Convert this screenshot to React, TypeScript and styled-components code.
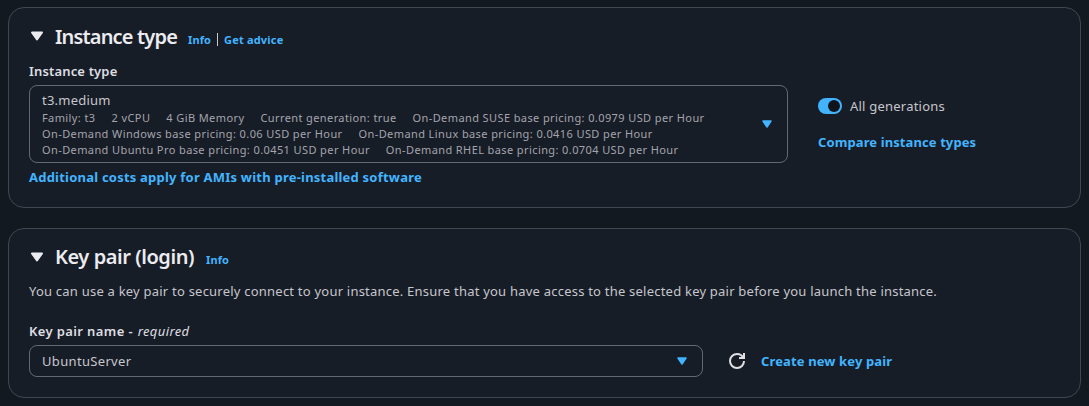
import React from "react";
import styled, { createGlobalStyle } from "styled-components";

const Global = createGlobalStyle`
  * { box-sizing: border-box; }
  body {
    margin: 0;
    background: #131920;
    color: #c6c6cd;
    font: 13px/20px "Noto Sans", "Open Sans", sans-serif;
    letter-spacing: 0.22px;
  }
`;

const Page = styled.main`
  display: flex;
  flex-direction: column;
  gap: 20px;
  padding: 7px 8px 8px;
`;

const Panel = styled.section<{ $height: number; $top: number }>`
  height: ${(p) => p.$height}px;
  padding: ${(p) => p.$top}px 20px 0;
  background: #171d26;
  border: 1px solid #424650;
  border-radius: 16px;
`;

const Header = styled.header`
  display: flex;
  align-items: center;
  height: 28px;
  white-space: nowrap;
`;

const Title = styled.h2<{ $width: number; $spacing: number }>`
  width: ${(p) => p.$width}px;
  margin: 0 11px 0 10px;
  color: #ebebf0;
  font-size: 20px;
  line-height: 24px;
  font-weight: 600;
  letter-spacing: ${(p) => p.$spacing}px;
`;

const HeaderLinks = styled.div`
  display: flex;
  align-items: center;
  gap: 6px;
  padding-top: 5px;
`;

const Divider = styled.span`
  width: 1px;
  height: 13px;
  background: #c6c6cd;
`;

const Link = styled.a<{ $small?: boolean; $spacing?: number }>`
  color: #42b4ff;
  font-weight: 700;
  font-size: ${(p) => (p.$small ? 11 : 13)}px;
  letter-spacing: ${(p) => p.$spacing ?? 0.1}px;
  white-space: nowrap;
`;

const Label = styled.div<{ $spacing: number }>`
  color: #dedee3;
  font-weight: 600;
  letter-spacing: ${(p) => p.$spacing}px;
  white-space: nowrap;
  em { font-weight: 400; margin-left: 1px; }
`;

const Row = styled.div<{ $gap: number; $top: number }>`
  display: flex;
  gap: ${(p) => p.$gap}px;
  margin-top: ${(p) => p.$top}px;
`;

const Select = styled.div<{ $width: number; $height: number }>`
  display: flex;
  align-items: center;
  justify-content: space-between;
  width: ${(p) => p.$width}px;
  height: ${(p) => p.$height}px;
  padding: 0 15px 0 12px;
  border: 1px solid #656871;
  border-radius: 8px;
  white-space: nowrap;
`;

const Value = styled.div<{ $spacing?: number }>`
  line-height: 20px;
  letter-spacing: ${(p) => p.$spacing ?? 0.23}px;
`;

const Specs = styled.div`
  display: flex;
  gap: 16px;
  height: 16px;
  color: #a4a4ad;
  font-size: 11px;
  line-height: 16px;
  letter-spacing: 0.4px;
`;

const Side = styled.div`
  display: flex;
  flex-direction: column;
  gap: 16px;
  padding-top: 11px;
`;

const ToggleRow = styled.div`
  display: flex;
  align-items: center;
  gap: 8px;
`;

const Toggle = styled.span`
  display: flex;
  justify-content: flex-end;
  width: 24px;
  height: 16px;
  padding: 2px;
  background: #42b4ff;
  border-radius: 8px;
  &::after {
    content: "";
    width: 12px;
    height: 12px;
    background: #0f141a;
    border-radius: 50%;
  }
`;

const Text = styled.p`
  margin: 10px 0 20px;
  white-space: nowrap;
`;

const Actions = styled.div`
  display: flex;
  align-items: center;
  gap: 16px;
`;

const HeadCaret = ({ drop = 0 }: { drop?: number }) => (
  <svg width="16" height="16" viewBox={`0 ${-drop} 16 16`}>
    <path d="M3 3.5h10l-5 7z" fill="#ebebf0" stroke="#ebebf0" strokeWidth="2" strokeLinejoin="round" />
  </svg>
);

const Caret = () => (
  <svg width="10" height="8" viewBox="0 0 10 8">
    <path d="M1 1h8L5 7z" fill="#42b4ff" stroke="#42b4ff" strokeWidth="1.5" strokeLinejoin="round" />
  </svg>
);

const Refresh = () => (
  <svg width="16" height="16" viewBox="0 0 16 16" fill="none" stroke="#dedee3" strokeWidth="2">
    <path d="M15 8a7 7 0 1 1-7-7 6.87 6.87 0 0 1 6.3 4" />
    <path d="M10 5h5V0" />
  </svg>
);

export default function App() {
  return (
    <>
      <Global />
      <Page>
        <Panel $height={201} $top={15}>
          <Header>
            <HeadCaret />
            <Title $width={122} $spacing={-0.83}>Instance type</Title>
            <HeaderLinks>
              <Link $small>Info</Link>
              <Divider />
              <Link $small $spacing={0.2}>Get advice</Link>
            </HeaderLinks>
          </Header>
          <Row $gap={0} $top={10}>
            <Label $spacing={0.16}>Instance type</Label>
          </Row>
          <Row $gap={30} $top={4}>
            <Select $width={759} $height={78}>
              <div>
                <Value>t3.medium</Value>
                <Specs>
                  <span>Family: t3</span>
                  <span>2 vCPU</span>
                  <span>4 GiB Memory</span>
                  <span>Current generation: true</span>
                  <span>On-Demand SUSE base pricing: 0.0979 USD per Hour</span>
                </Specs>
                <Specs>
                  <span>On-Demand Windows base pricing: 0.06 USD per Hour</span>
                  <span>On-Demand Linux base pricing: 0.0416 USD per Hour</span>
                </Specs>
                <Specs>
                  <span>On-Demand Ubuntu Pro base pricing: 0.0451 USD per Hour</span>
                  <span>On-Demand RHEL base pricing: 0.0704 USD per Hour</span>
                </Specs>
              </div>
              <Caret />
            </Select>
            <Side>
              <ToggleRow>
                <Toggle />
                All generations
              </ToggleRow>
              <Link>Compare instance types</Link>
            </Side>
          </Row>
          <Row $gap={0} $top={4}>
            <Link $spacing={0.22}>Additional costs apply for AMIs with pre-installed software</Link>
          </Row>
        </Panel>
        <Panel $height={170} $top={14}>
          <Header>
            <HeadCaret drop={1} />
            <Title $width={140} $spacing={-0.44}>Key pair (login)</Title>
            <HeaderLinks>
              <Link $small>Info</Link>
            </HeaderLinks>
          </Header>
          <Text>
            You can use a key pair to securely connect to your instance. Ensure that you have access to the selected key
            pair before you launch the instance.
          </Text>
          <Label $spacing={0.38}>
            Key pair name - <em>required</em>
          </Label>
          <Row $gap={26} $top={4}>
            <Select $width={674} $height={32}>
              <Value $spacing={0.33}>UbuntuServer</Value>
              <Caret />
            </Select>
            <Actions>
              <Refresh />
              <Link $spacing={0.13}>Create new key pair</Link>
            </Actions>
          </Row>
        </Panel>
      </Page>
    </>
  );
}
